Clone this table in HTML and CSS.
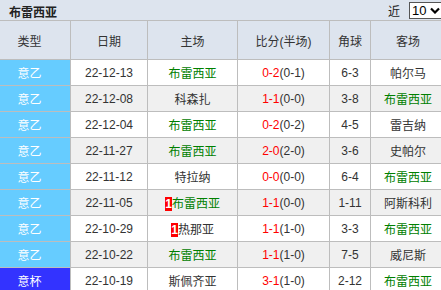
FILE: index.html
```html
<!DOCTYPE html>
<html>
<head>
<meta charset="utf-8">
<link rel="stylesheet" href="styles.css">
</head>
<body>
<div class="panel">
  <div class="titlebar">
    <span class="title">布雷西亚</span>
    <div class="picker">
      <span class="near">近</span>
      <div class="select"><span>10</span><svg width="10" height="7" viewBox="0 0 10 7"><path d="M1 1.5 L5 5.5 L9 1.5" fill="none" stroke="#000" stroke-width="2.2"/></svg></div>
    </div>
  </div>
  <table class="grid">
    <thead>
      <tr><th class="c1">类型</th><th class="c2">日期</th><th class="c3">主场</th><th class="c4">比分(半场)</th><th class="c5">角球</th><th class="c6">客场</th></tr>
    </thead>
    <tbody>
      <tr><td class="type">意乙</td><td>22-12-13</td><td class="win">布雷西亚</td><td><span class="ft">0-2</span>(0-1)</td><td>6-3</td><td>帕尔马</td></tr>
      <tr class="alt"><td class="type">意乙</td><td>22-12-08</td><td>科森扎</td><td><span class="ft">1-1</span>(0-0)</td><td>3-8</td><td class="win">布雷西亚</td></tr>
      <tr><td class="type">意乙</td><td>22-12-04</td><td class="win">布雷西亚</td><td><span class="ft">0-2</span>(0-2)</td><td>4-5</td><td>雷吉纳</td></tr>
      <tr class="alt"><td class="type">意乙</td><td>22-11-27</td><td class="win">布雷西亚</td><td><span class="ft">2-0</span>(2-0)</td><td>3-6</td><td>史帕尔</td></tr>
      <tr><td class="type">意乙</td><td>22-11-12</td><td>特拉纳</td><td><span class="ft">0-0</span>(0-0)</td><td>6-4</td><td class="win">布雷西亚</td></tr>
      <tr class="alt"><td class="type">意乙</td><td>22-11-05</td><td class="win"><span class="card">1</span>布雷西亚</td><td><span class="ft">1-1</span>(0-0)</td><td>1-11</td><td>阿斯科利</td></tr>
      <tr><td class="type">意乙</td><td>22-10-29</td><td><span class="card">1</span>热那亚</td><td><span class="ft">1-1</span>(1-0)</td><td>3-3</td><td class="win">布雷西亚</td></tr>
      <tr class="alt"><td class="type">意乙</td><td>22-10-22</td><td class="win">布雷西亚</td><td><span class="ft">1-1</span>(1-0)</td><td>7-5</td><td>威尼斯</td></tr>
      <tr><td class="type cup">意杯</td><td>22-10-19</td><td>斯佩齐亚</td><td><span class="ft">3-1</span>(1-0)</td><td>2-12</td><td class="win">布雷西亚</td></tr>
    </tbody>
  </table>
</div>
</body>
</html>
```

FILE: styles.css
```css
html, body {
  margin: 0;
  padding: 0;
  background: #ffffff;
  overflow: hidden;
}
.panel {
  width: 441px;
  font-family: "Liberation Sans", "Noto Sans CJK SC", sans-serif;
  font-size: 12px;
  color: #333333;
}
.titlebar {
  height: 20px;
  background: #dde4ee;
  border-bottom: 1px solid #bdbdbd;
  display: flex;
  align-items: center;
  justify-content: space-between;
  overflow: hidden;
}
.title {
  font-weight: bold;
  color: #222;
  padding-left: 9px;
  padding-top: 3px;
  font-size: 12px;
}
.picker {
  display: flex;
  align-items: center;
  gap: 9px;
  margin-right: -14px;
}
.near {
  font-size: 12px;
  color: #222;
}
.select {
  width: 42px;
  height: 15px;
  background: #fff;
  border: 1px solid #555;
  display: flex;
  align-items: center;
  gap: 4px;
  padding-left: 2px;
  box-sizing: content-box;
  font-size: 13px;
  color: #000;
}
.grid {
  border-collapse: separate;
  border-spacing: 0;
  width: 441px;
  table-layout: fixed;
}
.grid th, .grid td {
  border-right: 1px solid #bdbdbd;
  border-bottom: 1px solid #bdbdbd;
  text-align: center;
  padding: 0;
  white-space: nowrap;
  overflow: hidden;
}
.grid th {
  background: #dde4ee;
  height: 38px;
  font-weight: normal;
  color: #333;
}
.grid td {
  height: 25px;
  background: #fff;
}
.grid tr.alt td {
  background: #f0f0f0;
}
.grid th:last-child, .grid td:last-child {
  border-right: none;
}
.c1 { width: 59px; padding-right: 11px !important; }
.c2 { width: 76px; }
.c3 { width: 89px; }
.c4 { width: 91px; }
.c5 { width: 40px; }
.c6 { width: 70px; padding-left: 2px !important; }
.grid td:first-child { padding-right: 11px; }
.grid td:last-child { padding-left: 2px; }
.grid td.type, .grid tr.alt td.type {
  background: #66ccff;
  color: #ffffff;
}
.grid td.cup, .grid tr.alt td.cup {
  background: #3333ff;
}
.win { color: #008000; }
.ft { color: #ff0000; }
.card {
  display: inline-block;
  background: #ff0000;
  color: #fff;
  font-weight: bold;
  width: 7px;
  height: 14px;
  line-height: 14px;
  text-align: center;
  vertical-align: middle;
  font-size: 12px;
}
```
